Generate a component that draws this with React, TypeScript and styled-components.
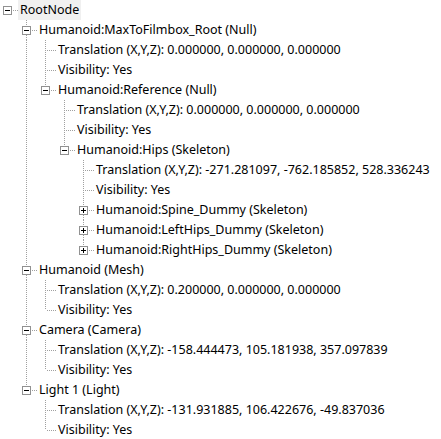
import React from 'react';
import styled, { createGlobalStyle } from 'styled-components';

type TreeNode = {
  label: string;
  children?: TreeNode[];
  collapsed?: boolean;
  selected?: boolean;
};

type Row = {
  node: TreeNode;
  depth: number;
  guides: boolean[];
  last: boolean;
};

const props = (xyz: string): TreeNode[] => [
  { label: `Translation (X,Y,Z): ${xyz}` },
  { label: 'Visibility: Yes' },
];

const tree: TreeNode[] = [
  {
    label: 'RootNode',
    selected: true,
    children: [
      {
        label: 'Humanoid:MaxToFilmbox_Root (Null)',
        children: [
          ...props('0.000000, 0.000000, 0.000000'),
          {
            label: 'Humanoid:Reference (Null)',
            children: [
              ...props('0.000000, 0.000000, 0.000000'),
              {
                label: 'Humanoid:Hips (Skeleton)',
                children: [
                  ...props('-271.281097, -762.185852, 528.336243'),
                  { label: 'Humanoid:Spine_Dummy (Skeleton)', children: [], collapsed: true },
                  { label: 'Humanoid:LeftHips_Dummy (Skeleton)', children: [], collapsed: true },
                  { label: 'Humanoid:RightHips_Dummy (Skeleton)', children: [], collapsed: true },
                ],
              },
            ],
          },
        ],
      },
      { label: 'Humanoid (Mesh)', children: props('0.200000, 0.000000, 0.000000') },
      { label: 'Camera (Camera)', children: props('-158.444473, 105.181938, 357.097839') },
      { label: 'Light 1 (Light)', children: props('-131.931885, 106.422676, -49.837036') },
    ],
  },
];

const flatten = (nodes: TreeNode[], depth: number, guides: boolean[], out: Row[]) => {
  nodes.forEach((node, i) => {
    const last = i === nodes.length - 1;
    out.push({ node, depth, guides, last });
    if (node.children && !node.collapsed) {
      flatten(node.children, depth + 1, [...guides, !last], out);
    }
  });
  return out;
};

const rows = flatten(tree, 0, [], []);

const GlobalStyle = createGlobalStyle`
  html, body {
    margin: 0;
    padding: 0;
    background: #ffffff;
  }
`;

const TreeView = styled.div`
  width: 441px;
  height: 439px;
  overflow: hidden;
  background: #ffffff;
  font-family: 'Noto Sans', 'Liberation Sans', sans-serif;
  font-size: 12.5px;
  color: #000000;
`;

const ItemRow = styled.div`
  display: flex;
  align-items: stretch;
  height: 20px;
`;

const Guide = styled.svg`
  flex: 0 0 19px;
  width: 19px;
  height: 20px;
  display: block;
`;

const Connector = styled.svg`
  flex: 0 0 18px;
  width: 18px;
  height: 20px;
  display: block;
`;

const Label = styled.span<{ $selected?: boolean }>`
  display: block;
  height: 20px;
  line-height: 19px;
  padding: 0 2px;
  white-space: nowrap;
  background: ${(p) => (p.$selected ? '#f0f0f0' : 'transparent')};
`;

const DOT = '#a0a0a0';

const VLine = ({ y1, y2 }: { y1: number; y2: number }) => (
  <line x1={7.5} y1={y1} x2={7.5} y2={y2} stroke={DOT} strokeDasharray="1 1" shapeRendering="crispEdges" />
);

const ItemConnector = ({ row }: { row: Row }) => {
  const hasKids = !!row.node.children;
  const up = row.depth > 0;
  const down = !row.last;
  return (
    <Connector viewBox="0 0 18 20">
      {up && <VLine y1={0} y2={hasKids ? 6 : 10} />}
      {down && <VLine y1={hasKids ? 15 : 10} y2={20} />}
      <line
        x1={hasKids ? 13 : 9}
        y1={10.5}
        x2={18}
        y2={10.5}
        stroke={DOT}
        strokeDasharray="1 1"
        shapeRendering="crispEdges"
      />
      {hasKids && (
        <g shapeRendering="crispEdges">
          <rect x={3.5} y={6.5} width={8} height={8} fill="#ffffff" stroke="#919191" />
          <line x1={5} y1={10.5} x2={10} y2={10.5} stroke="#000000" />
          {row.node.collapsed && <line x1={7.5} y1={8} x2={7.5} y2={13} stroke="#000000" />}
        </g>
      )}
    </Connector>
  );
};

const App = () => {
  return (
    <>
      <GlobalStyle />
      <TreeView>
        {rows.map((row, i) => (
          <ItemRow key={i}>
            {row.guides.map((on, g) => (
              <Guide key={g} viewBox="0 0 19 20">
                {on && <VLine y1={0} y2={20} />}
              </Guide>
            ))}
            <ItemConnector row={row} />
            <Label $selected={row.node.selected}>{row.node.label}</Label>
          </ItemRow>
        ))}
      </TreeView>
    </>
  );
};

export default App;
